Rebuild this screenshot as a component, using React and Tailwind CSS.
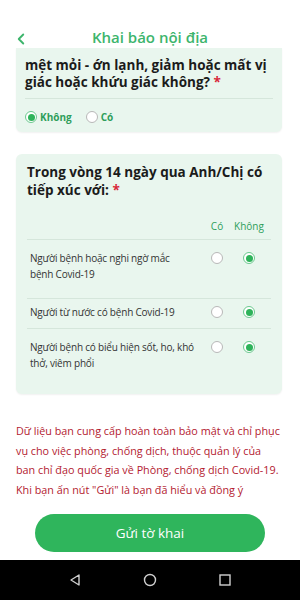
import { ChevronLeft } from "lucide-react"

const rows = [
  { lines: ["Người bệnh hoặc nghi ngờ mắc", "bệnh Covid-19"] },
  { lines: ["Người từ nước có bệnh Covid-19"] },
  { lines: ["Người bệnh có biểu hiện sốt, ho, khó", "thở, viêm phổi"] },
]

const Radio = ({ on }) =>
  on ? (
    <span className="w-[12px] h-[12px] rounded-full border border-[#6cc98f] flex items-center justify-center bg-white">
      <span className="w-[7px] h-[7px] rounded-full bg-[#2eb35a]" />
    </span>
  ) : (
    <span className="w-[12px] h-[12px] rounded-full border border-[#b8b8b8] bg-white" />
  )

export default function App() {
  return (
    <div className="w-[300px] h-[600px] bg-white flex flex-col overflow-hidden font-['Open_Sans',sans-serif]">
      {/* Header */}
      <div className="h-[48px] shrink-0 flex items-end pb-[1px] px-[12px] bg-white">
        <ChevronLeft className="w-[18px] h-[18px] text-[#3db56c] mb-[-1px]" strokeWidth={2.5} />
        <p className="flex-1 text-center text-[15px] font-semibold text-[#3db56c] leading-[20px] pr-[18px]">
          Khai báo nội địa
        </p>
      </div>

      {/* Card 1 (scrolled, top hidden under header) */}
      <div className="mx-[16px] w-[266px] bg-[#e9f6ee] rounded-b-[6px] shadow-[0_1px_2px_rgba(0,0,0,0.06)] overflow-hidden px-[9px] pt-[9px] pb-[8px] shrink-0">
        <p className="text-[13.5px] font-bold leading-[17px] text-[#1b1b1b] whitespace-nowrap">
          mệt mỏi - ớn lạnh, giảm hoặc mất vị
          <br />
          giác hoặc khứu giác không? <span className="text-[#d8283a]">*</span>
        </p>
        <div className="mt-[7px] border-t border-[#d5e6db]" />
        <div className="flex items-center gap-[14px] mt-[11px]">
          <div className="flex items-center gap-[3px]">
            <Radio on />
            <span className="text-[10px] font-bold text-[#2e9e5b] leading-[14px]">Không</span>
          </div>
          <div className="flex items-center gap-[3px]">
            <Radio />
            <span className="text-[10px] font-bold text-[#2e9e5b] leading-[14px]">Có</span>
          </div>
        </div>
      </div>

      {/* Card 2 */}
      <div className="mx-[16px] mt-[22px] w-[266px] h-[240px] bg-[#e9f6ee] rounded-[6px] shadow-[0_1px_2px_rgba(0,0,0,0.06)] px-[11px] pt-[9px] shrink-0">
        <p className="text-[13.5px] font-bold leading-[18px] text-[#1b1b1b]">
          Trong vòng 14 ngày qua Anh/Chị có tiếp xúc với: <span className="text-[#d8283a]">*</span>
        </p>
        <div className="flex justify-end mt-[20px] text-[10px] text-[#2e9e5b] leading-[14px]">
          <span className="w-[20px] text-center">Có</span>
          <span className="w-[44px] text-center">Không</span>
        </div>
        <div className="mt-[6px] border-t border-[#d5e6db]" />
        {rows.map((r, i) => (
          <div
            key={r.lines[0]}
            className={`flex items-start ${i > 0 ? "border-t border-[#d5e6db]" : ""} ${
              i === 0 ? "pt-[10px] h-[58px]" : i === 1 ? "pt-[5px] h-[30px]" : "pt-[10px]"
            }`}
          >
            <p className="flex-1 pl-[3px] text-[10px] tracking-[-0.2px] leading-[16px] text-[#333] whitespace-nowrap">
              {r.lines.map((l, j) => (
                <span key={j} className="block">
                  {l}
                </span>
              ))}
            </p>
            <div className="flex pt-[2px]">
              <span className="w-[20px] flex justify-center">
                <Radio />
              </span>
              <span className="w-[44px] flex justify-center">
                <Radio on />
              </span>
            </div>
          </div>
        ))}
      </div>

      {/* Notice */}
      <p className="mx-[16px] mt-[27px] text-[10.8px] leading-[19.5px] text-[#b3202f] whitespace-nowrap">
        Dữ liệu bạn cung cấp hoàn toàn bảo mật và chỉ phục
        <br />
        vụ cho việc phòng, chống dịch, thuộc quản lý của
        <br />
        ban chỉ đạo quốc gia về Phòng, chống dịch Covid-19.
        <br />
        Khi bạn ấn nút "Gửi" là bạn đã hiểu và đồng ý
      </p>

      {/* Button */}
      <div className="flex justify-center mt-[15px] shrink-0">
        <button className="w-[230px] h-[38px] rounded-full bg-[#2fb55c] text-white text-[13.5px]">
          Gửi tờ khai
        </button>
      </div>

      <div className="flex-1" />

      {/* Nav bar */}
      <div className="h-[40px] bg-black shrink-0 flex items-center justify-center gap-[61px]">
        <svg width="14" height="14" viewBox="0 0 14 14" fill="none" stroke="#d0d0d0" strokeWidth="1.4">
          <path d="M11 2 L3 7 L11 12 Z" strokeLinejoin="round" />
        </svg>
        <svg width="14" height="14" viewBox="0 0 14 14" fill="none" stroke="#d0d0d0" strokeWidth="1.4">
          <circle cx="7" cy="7" r="5.5" />
        </svg>
        <svg width="14" height="14" viewBox="0 0 14 14" fill="none" stroke="#d0d0d0" strokeWidth="1.4">
          <rect x="2" y="2" width="10" height="10" />
        </svg>
      </div>
    </div>
  )
}
